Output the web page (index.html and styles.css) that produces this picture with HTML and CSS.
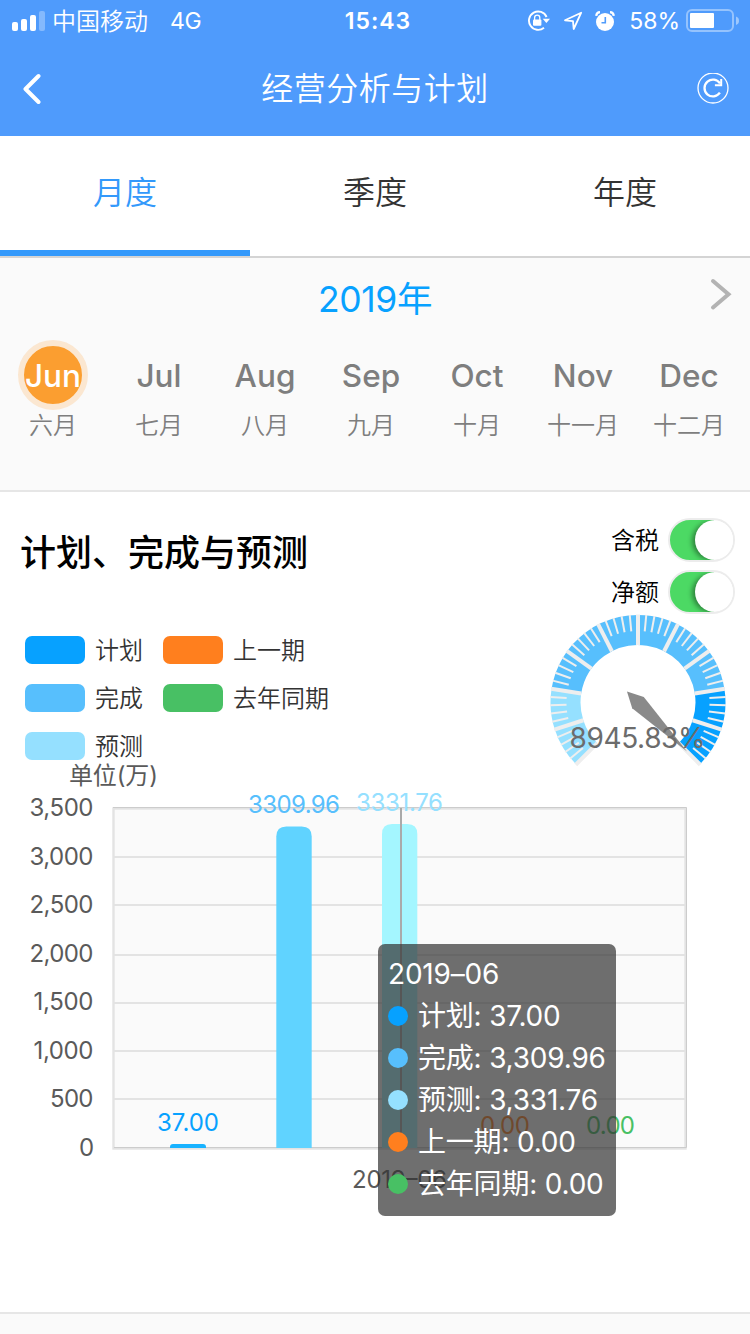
FILE: index.html
```html
<!DOCTYPE html>
<html lang="zh-CN">
<head>
<meta charset="utf-8">
<title>经营分析与计划</title>
<link rel="stylesheet" href="styles.css">
</head>
<body>
<header class="top">
  <div class="status">
    <div class="status-left">
      <svg class="signal" width="34" height="20" viewBox="0 0 34 20" fill="#fff">
        <rect x="0" y="11" width="6" height="9" rx="2"/><rect x="9" y="8" width="6" height="12" rx="2"/><rect x="18" y="4" width="6" height="16" rx="2"/><rect x="27" y="0" width="6" height="20" rx="2" opacity=".3"/>
      </svg>
      <span class="carrier">中国移动</span><span class="net">4G</span>
    </div>
    <span class="clock">15:43</span>
    <div class="status-right">
      <svg width="24" height="22" viewBox="0 0 24 22">
        <path d="M19.6 7A9.2 9.2 0 1 0 17 17.8" fill="none" stroke="#fff" stroke-width="1.9"/>
        <path d="M15.7 8.7h7.3l-3.6 4.3z" fill="#fff"/>
        <rect x="6" y="9.6" width="8.4" height="6.2" rx="1" fill="#fff"/>
        <path d="M7.6 10V7.7a2.6 2.6 0 0 1 5.2 0V10" fill="none" stroke="#fff" stroke-width="1.3"/>
      </svg>
      <svg class="locate" width="20" height="20" viewBox="0 0 20 20"><path d="M18.2 1.7 2 9.3l8 .9.7 7.8z" fill="none" stroke="#fff" stroke-width="1.8" stroke-linejoin="round"/></svg>
      <svg class="alarm" width="20" height="21" viewBox="0 0 20 21"><circle cx="10" cy="11" r="9" fill="#fff"/><path d="M1.2 4.8A4 4 0 0 1 5 1.2M15 1.2a4 4 0 0 1 3.8 3.6" stroke="#fff" stroke-width="2.2" fill="none"/><path d="M10.3 6v5.7H6.5" fill="none" stroke="#4f9bfc" stroke-width="1.6"/></svg>
      <span class="percent">58%</span>
      <svg class="battery" width="54" height="24" viewBox="0 0 54 24"><rect x="1" y="1" width="46" height="21" rx="5" fill="none" stroke="#fff" stroke-opacity=".4" stroke-width="2"/><rect x="4" y="4" width="24" height="15" rx="1" fill="#fff"/><path d="M50 7.5q3 1 3 4.2t-3 4.3z" fill="#fff" opacity=".45"/></svg>
    </div>
  </div>
  <div class="nav">
    <svg width="20" height="32" viewBox="0 0 20 32"><path d="M17.5 3 4.5 16l13 13" fill="none" stroke="#fff" stroke-width="4" stroke-linecap="round" stroke-linejoin="round"/></svg>
    <h1 class="title">经营分析与计划</h1>
    <svg width="32" height="32" viewBox="0 0 32 32" fill="none" stroke="#fff"><circle cx="16" cy="15" r="15" stroke-width="1.3"/><path d="M22.9 19.7A8.4 8.4 0 1 1 23 10.5" stroke-width="2.3"/><path d="M24.2 6v6.3h-6.3" stroke-width="2"/></svg>
  </div>
</header>

<nav class="tabs">
  <span class="tab tab-active">月度</span><span class="tab">季度</span><span class="tab">年度</span>
</nav>

<section class="calendar">
  <div class="year-row">
    <span class="year">2019年</span>
    <svg class="next" width="24" height="34" viewBox="0 0 24 34"><path d="M4 4l15.5 13.2L4 30.5" fill="none" stroke="#b3b3b3" stroke-width="4" stroke-linecap="round"/></svg>
  </div>
  <div class="months">
    <div class="month current"><span class="en">Jun</span><span class="cn">六月</span></div>
    <div class="month"><span class="en">Jul</span><span class="cn">七月</span></div>
    <div class="month"><span class="en">Aug</span><span class="cn">八月</span></div>
    <div class="month"><span class="en">Sep</span><span class="cn">九月</span></div>
    <div class="month"><span class="en">Oct</span><span class="cn">十月</span></div>
    <div class="month"><span class="en">Nov</span><span class="cn">十一月</span></div>
    <div class="month"><span class="en">Dec</span><span class="cn">十二月</span></div>
  </div>
</section>

<section class="card">
  <div class="overview">
    <div class="overview-left">
      <h2 class="heading">计划、完成与预测</h2>
      <div class="legend">
        <span class="item"><i class="swatch plan"></i><span class="label">计划</span></span>
        <span class="item"><i class="swatch prev"></i><span class="label">上一期</span></span>
        <span class="item"><i class="swatch done"></i><span class="label">完成</span></span>
        <span class="item"><i class="swatch last"></i><span class="label">去年同期</span></span>
        <span class="item"><i class="swatch fore"></i><span class="label">预测</span></span>
      </div>
    </div>
    <div class="overview-right">
      <div class="switch-row"><span class="label">含税</span><span class="switch"><i class="knob"></i></span></div>
      <div class="switch-row"><span class="label">净额</span><span class="switch"><i class="knob"></i></span></div>
      <svg class="gauge" width="200" height="160" viewBox="-100 -88.5 200 160">
        <defs>
          <g id="ticks" stroke="#eee">
            <path d="M57.5 0h30.5" stroke-width="4"/>
            <path d="M71.5 0h16.5" stroke-width="2" transform="rotate(5.4)"/>
            <path d="M71.5 0h16.5" stroke-width="2" transform="rotate(10.8)"/>
            <path d="M71.5 0h16.5" stroke-width="2" transform="rotate(16.2)"/>
            <path d="M71.5 0h16.5" stroke-width="2" transform="rotate(21.6)"/>
          </g>
        </defs>
        <g fill="none" stroke-width="30">
          <circle r="72.5" pathLength="360" stroke="#95e0ff" stroke-dasharray="54 306" transform="rotate(135)"/>
          <circle r="72.5" pathLength="360" stroke="#57bffd" stroke-dasharray="162 198" transform="rotate(189)"/>
          <circle r="72.5" pathLength="360" stroke="#07a1ff" stroke-dasharray="54 306" transform="rotate(351)"/>
        </g>
        <use href="#ticks" transform="rotate(135)"/><use href="#ticks" transform="rotate(162)"/><use href="#ticks" transform="rotate(189)"/><use href="#ticks" transform="rotate(216)"/><use href="#ticks" transform="rotate(243)"/>
        <use href="#ticks" transform="rotate(270)"/><use href="#ticks" transform="rotate(297)"/><use href="#ticks" transform="rotate(324)"/><use href="#ticks" transform="rotate(351)"/><use href="#ticks" transform="rotate(378)"/>
        <path d="M57.5 0h30.5" stroke="#eee" stroke-width="4" transform="rotate(45)"/>
        <path d="M-11-11 5.8-5.4 49 49-5.8 5.8z" fill="#8a8a8a"/>
        <text class="gauge-value" x="-68.5" y="45" textLength="136">8945.83%</text>
      </svg>
    </div>
  </div>

  <div class="chart">
    <svg class="plot" width="750" height="450" viewBox="0 760 750 450">
      <rect x="113" y="808" width="573" height="340" fill="#fafafa"/>
      <path d="M114 857h572M114 905h572M114 955h572M114 1003h572M114 1051h572M114 1099h572" stroke="#e3e3e3" stroke-width="2"/>
      <rect x="113.5" y="808.5" width="572" height="340" fill="none" stroke="#e3e3e3" stroke-width="2.4"/>
      <path d="M113 807.5h573.5v340H114" fill="none" stroke="#ccc"/>
      <path d="M170 1148v-1q0-3 3-3h30q3 0 3 3v1z" fill="#18b2ff"/>
      <path d="M276.3 1148V836.5q0-10 10-10h15.4q10 0 10 10V1148z" fill="#60d3ff"/>
      <path d="M382 1148V834q0-10 10-10h15.3q10 0 10 10v314z" fill="#a4f6ff"/>
      <g class="values">
        <text x="157" y="1131" textLength="62" fill="#07a1ff">37.00</text>
        <text x="248" y="813" textLength="92" fill="#57bffd">3309.96</text>
        <text x="356" y="811" textLength="87" fill="#95e0ff">3331.76</text>
        <text x="480" y="1134" textLength="50" fill="#ff7f1e">0.00</text>
        <text x="586" y="1134" textLength="49" fill="#48c064">0.00</text>
      </g>
      <path d="M401 808v340" stroke="#aaa" stroke-width="2"/>
      <g class="axis">
        <text x="69" y="784" textLength="89">单位(万)</text>
        <text x="29.5" y="816" textLength="64">3,500</text>
        <text x="29.5" y="865" textLength="64">3,000</text>
        <text x="29.5" y="913" textLength="64">2,500</text>
        <text x="29.5" y="962" textLength="64">2,000</text>
        <text x="33.5" y="1010" textLength="60">1,500</text>
        <text x="33.5" y="1059" textLength="60">1,000</text>
        <text x="50" y="1107" textLength="43.5">500</text>
        <text x="79" y="1156">0</text>
        <text x="352" y="1188" textLength="95">2019–06</text>
      </g>
    </svg>
    <div class="tooltip">
      <div class="tip-title">2019–06</div>
      <div class="tip"><i class="dot plan"></i>计划: 37.00</div>
      <div class="tip"><i class="dot done"></i>完成: 3,309.96</div>
      <div class="tip"><i class="dot fore"></i>预测: 3,331.76</div>
      <div class="tip"><i class="dot prev"></i>上一期: 0.00</div>
      <div class="tip"><i class="dot last"></i>去年同期: 0.00</div>
    </div>
  </div>
</section>
</body>
</html>
```
FILE: styles.css
```css
* { box-sizing: border-box; }
body {
  margin: 0;
  width: 750px;
  height: 1334px;
  overflow: hidden;
  background: #fafafa;
  font-family: Inter, "Noto Sans CJK SC", sans-serif;
  font-weight: 350;
  font-size: 24px;
  color: #333;
}
svg { display: block; flex: none; }
i { font-style: normal; }

.top { height: 136px; background: #4f9bfc; color: #fff; }
.status { display: grid; grid-template-columns: 1fr auto 1fr; height: 41px; align-items: center; padding: 0 10px 0 12px; line-height: 41px; }
.status-left, .status-right { display: flex; align-items: center; }
.status-right { justify-content: flex-end; }
.carrier { height: 41px; line-height: 42px; margin-left: 6px; }
.net { margin-left: 22px; font-size: 23px; font-weight: 400; letter-spacing: -.3px; }
.clock { padding: 1px 0 0 4px; font-weight: 600; font-size: 23px; letter-spacing: 1px; }
.locate { margin-left: 12px; }
.alarm { margin-left: 12px; }
.percent { margin-left: 14px; padding-top: 1px; font-size: 23px; font-weight: 400; }
.battery { margin-left: 6px; }
.nav { display: grid; grid-template-columns: 1fr auto 1fr; align-items: center; height: 95px; padding: 0 21px 0 21px; }
.nav svg:last-child { justify-self: end; }
.title { margin: 0 0 6px; font-size: 32px; font-weight: 350; letter-spacing: .5px; }

.tabs { display: flex; height: 122px; background: #fff; border-bottom: 2px solid #d4d4d4; }
.tab { flex: 1; height: 120px; line-height: 114px; text-align: center; font-size: 32px; }
.tab-active { color: #3399fb; border-bottom: 6px solid #3399fb; }

.calendar { height: 234px; border-bottom: 2px solid #e6e6e6; }
.year-row { display: grid; grid-template-columns: 1fr auto 1fr; height: 82px; align-items: center; }
.year { grid-column: 2; margin-bottom: 5px; color: #07a1ff; font-size: 35.5px; font-weight: 400; letter-spacing: -.4px; }
.next { justify-self: end; margin: 0 17px 10px 0; }
.months { display: grid; grid-template-columns: repeat(7, 106px); }
.month { display: flex; flex-direction: column; align-items: center; color: #7e7e7e; }
.en { display: flex; align-items: center; justify-content: center; width: 70px; height: 70px; border-radius: 50%; font-size: 31.5px; font-weight: 500; }
.cn { margin-top: 1px; line-height: 30px; }
.current .en { color: #fff; background: #fb9e30; border: 6px solid #fbe7d1; }

.card { height: 822px; background: #fff; border-bottom: 2px solid #e6e6e6; }
.overview { display: flex; justify-content: space-between; height: 268px; }
.heading { margin: 37px 0 0 20px; line-height: 48px; font-size: 36px; font-weight: 500; color: #000; }
.legend { display: grid; grid-template-columns: 138px 200px; grid-auto-rows: 48px; align-items: center; margin: 49px 0 0 25px; }
.item { display: flex; align-items: center; gap: 10px; }
.label { padding-bottom: 3px; }
.swatch { width: 60px; height: 28px; border-radius: 7px; }
.plan { background: #07a1ff; }
.done { background: #57bffd; }
.fore { background: #95e0ff; }
.prev { background: #ff7f1e; }
.last { background: #48c064; }
.overview-right { display: flex; flex-direction: column; align-items: flex-end; padding-top: 22px; }
.switch-row { display: flex; flex: none; align-items: center; gap: 9px; height: 52px; margin-right: 15px; color: #000; }
.switch { display: flex; width: 67px; height: 44px; padding-left: 25px; border: 2px solid #ececec; border-radius: 22px; background: linear-gradient(90deg, #4cd964 44px, #fff 44px); overflow: hidden; }
.knob { flex: none; width: 40px; height: 40px; border-radius: 50%; background: #fff; box-shadow: -4px 1px 5px -1px rgba(0, 0, 0, .4); }
.gauge { margin: -4px 12.5px 0 0; }
.gauge-value { font-size: 28px; font-weight: 400; fill: #6c6c6c; }

.chart { position: relative; height: 552px; }
.axis { font-size: 24px; font-weight: 400; fill: #5a5a5a; }
.values { font-size: 24px; font-weight: 400; }
.tooltip { position: absolute; left: 378px; top: 184px; width: 238px; height: 272px; padding: 9px 10px; border-radius: 7px; background: rgba(50, 50, 50, .7); color: #fff; font-size: 28px; font-weight: 400; letter-spacing: -.2px; line-height: 42px; white-space: nowrap; }
.tip { display: flex; align-items: center; gap: 10px; height: 42px; }
.dot { width: 20px; height: 20px; border-radius: 50%; }
```
